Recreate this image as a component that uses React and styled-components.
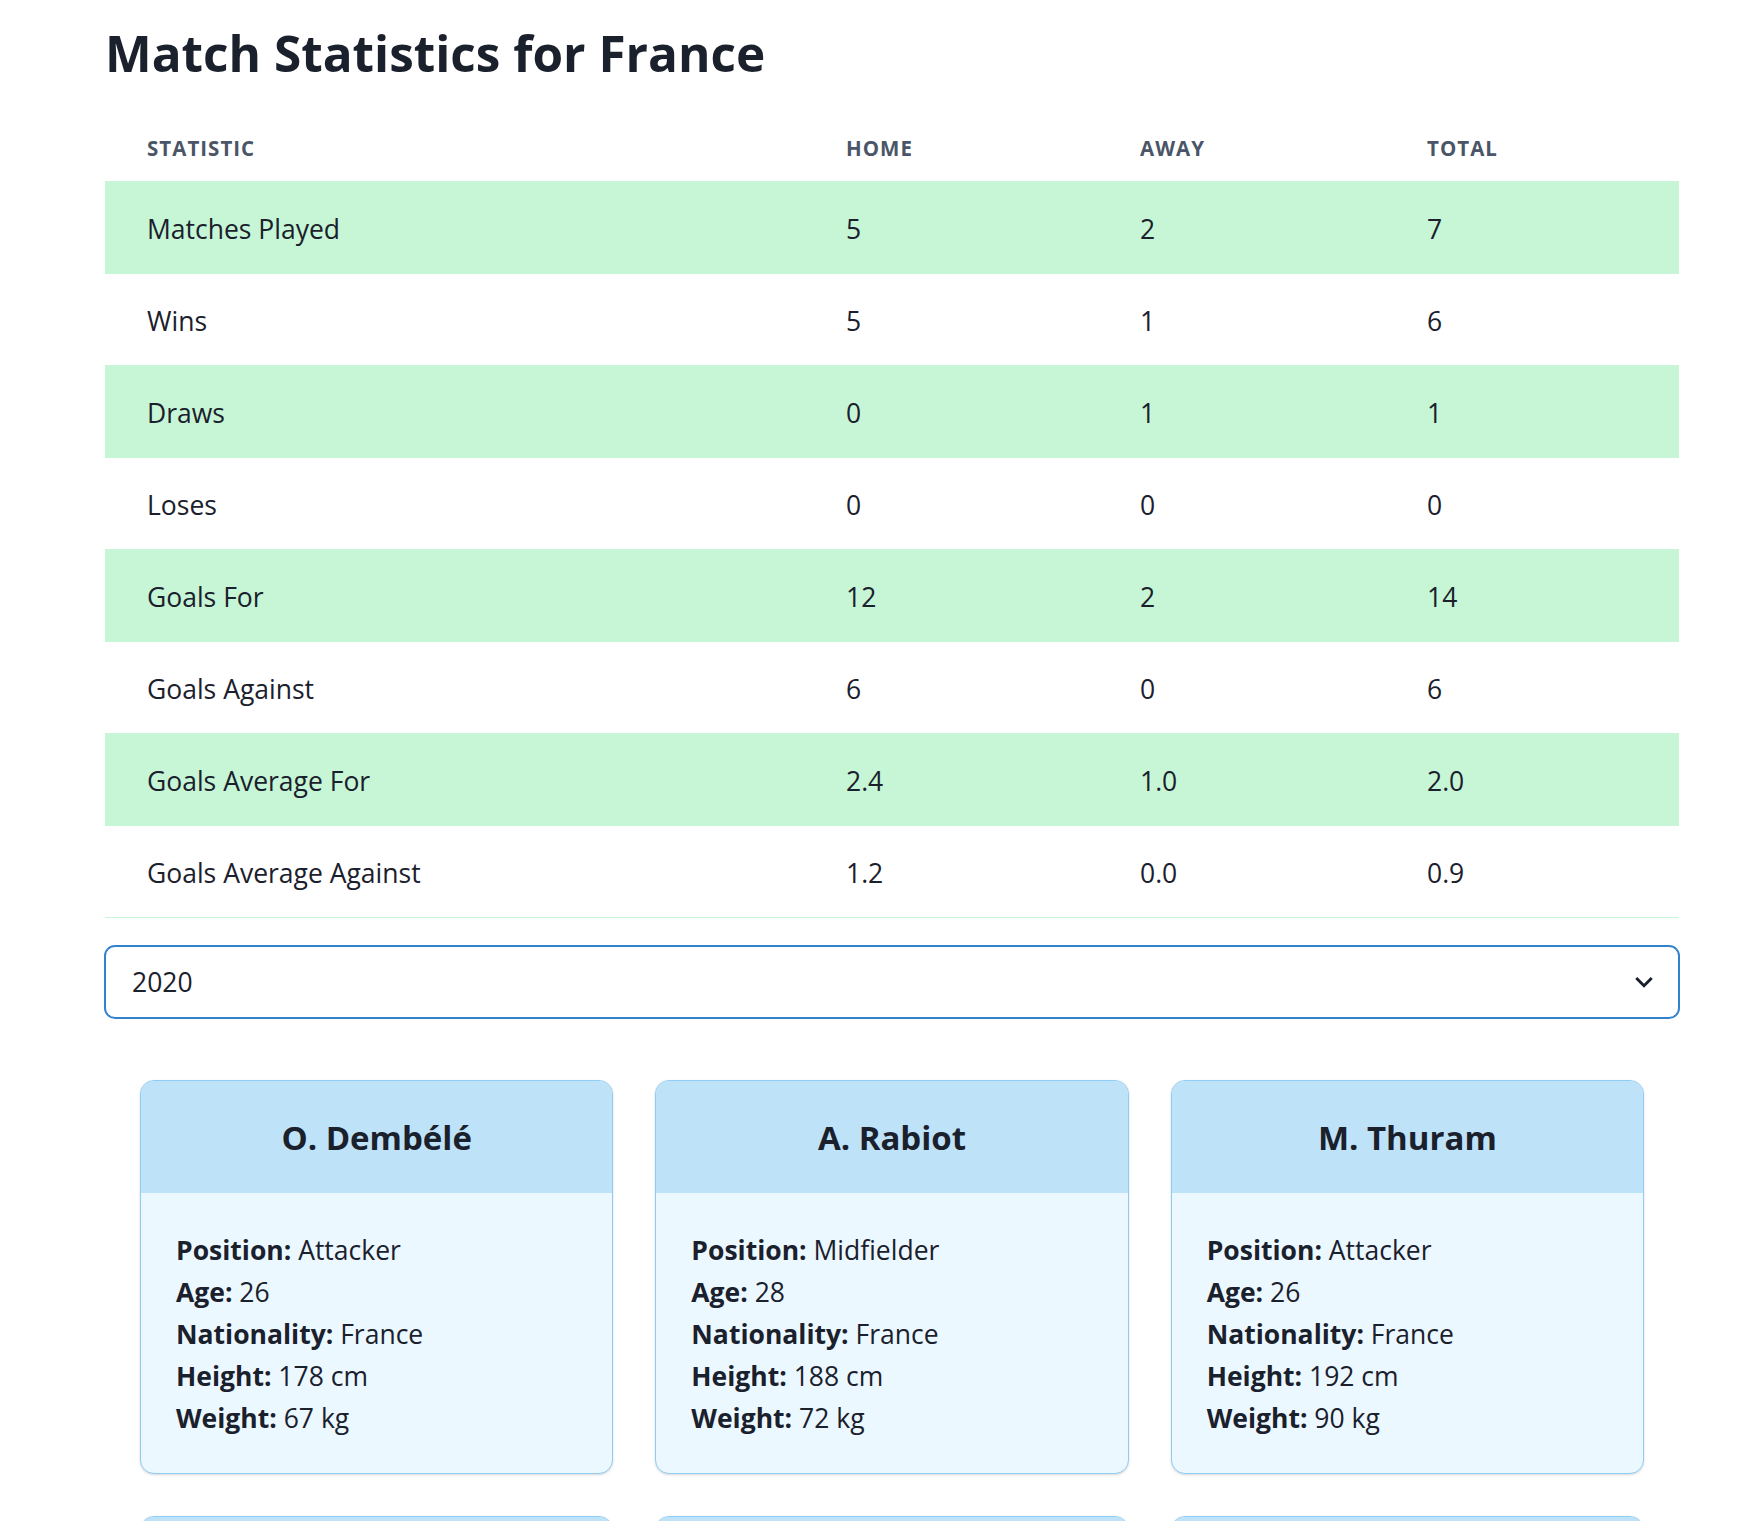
import React, { useState } from 'react';
import styled, { createGlobalStyle } from 'styled-components';

const GlobalStyle = createGlobalStyle`
  body {
    margin: 0;
    background: #ffffff;
    font-family: "Open Sans", "Noto Sans", sans-serif;
    color: #1a202c;
  }
`;

const Page = styled.main`
  padding: 23px 84px 0 105px;
`;

const Title = styled.h1`
  margin: 0 0 27px;
  font-size: 49.5px;
  line-height: 61px;
  font-weight: 700;
  color: #1a202c;
`;

const Table = styled.table`
  width: 100%;
  border-collapse: collapse;
  table-layout: fixed;
`;

const Col = styled.col`
  width: ${props => props.$w}px;
`;

const Th = styled.th`
  padding: 23px 42px 19px;
  text-align: left;
  font-size: 20.5px;
  line-height: 28px;
  font-weight: 700;
  letter-spacing: 0.05em;
  text-transform: uppercase;
  color: #4a5568;
  border-bottom: 1px solid #c6f6d5;
`;

const Row = styled.tr`
  background: ${props => (props.$striped ? '#c6f6d5' : 'transparent')};
`;

const Td = styled.td`
  padding: 30px 42px 26px;
  font-size: 26.5px;
  line-height: 35px;
  border-bottom: 1px solid #c6f6d5;
`;

const SelectWrap = styled.div`
  position: relative;
  margin-top: 28px;
`;

const Select = styled.select`
  width: 100%;
  height: 72px;
  appearance: none;
  -webkit-appearance: none;
  border: 1px solid #3182ce;
  box-shadow: 0 0 0 1px #3182ce;
  border-radius: 10px;
  background: #fff;
  padding: 0 70px 0 26px;
  font-family: inherit;
  font-size: 26.5px;
  color: #1a202c;
  outline: none;
`;

const Chevron = styled.svg`
  position: absolute;
  right: 14px;
  top: 50%;
  width: 42px;
  height: 35px;
  transform: translateY(-50%);
  pointer-events: none;
  color: #1a202c;
`;

const CardGrid = styled.section`
  margin-top: 27px;
  padding: 35px;
  display: grid;
  grid-template-columns: repeat(3, 1fr);
  gap: 42px;
`;

const Card = styled.article`
  border: 1px solid #90cdf4;
  border-radius: 14px;
  overflow: hidden;
  background: #ebf8ff;
  box-shadow: 0 1px 3px rgba(0, 0, 0, 0.1), 0 1px 2px rgba(0, 0, 0, 0.06);
`;

const CardHead = styled.header`
  background: #bee3f8;
  padding: 36px 35px 34px;
  text-align: center;

  h2 {
    margin: 0;
    font-size: 33px;
    line-height: 42px;
    font-weight: 700;
  }
`;

const CardBody = styled.div`
  padding: 36px 35px 34px;
  font-size: 26.5px;
  line-height: 42px;

  p {
    margin: 0;
  }
  b {
    font-weight: 700;
  }
`;

const stats = [
  ['Matches Played', '5', '2', '7'],
  ['Wins', '5', '1', '6'],
  ['Draws', '0', '1', '1'],
  ['Loses', '0', '0', '0'],
  ['Goals For', '12', '2', '14'],
  ['Goals Against', '6', '0', '6'],
  ['Goals Average For', '2.4', '1.0', '2.0'],
  ['Goals Average Against', '1.2', '0.0', '0.9'],
];

const players = [
  { name: 'O. Dembélé', position: 'Attacker', age: 26, nationality: 'France', height: '178 cm', weight: '67 kg' },
  { name: 'A. Rabiot', position: 'Midfielder', age: 28, nationality: 'France', height: '188 cm', weight: '72 kg' },
  { name: 'M. Thuram', position: 'Attacker', age: 26, nationality: 'France', height: '192 cm', weight: '90 kg' },
  { name: 'K. Mbappé', position: 'Attacker', age: 25, nationality: 'France', height: '178 cm', weight: '73 kg' },
  { name: 'A. Griezmann', position: 'Attacker', age: 33, nationality: 'France', height: '176 cm', weight: '73 kg' },
  { name: 'N. Kanté', position: 'Midfielder', age: 33, nationality: 'France', height: '168 cm', weight: '70 kg' },
];

function App() {
  const [season, setSeason] = useState('2020');

  return (
    <Page>
      <GlobalStyle />
      <Title>Match Statistics for France</Title>
      <Table>
        <colgroup>
          <Col $w={699} />
          <Col $w={294} />
          <Col $w={287} />
          <Col $w={294} />
        </colgroup>
        <thead>
          <tr>
            <Th>Statistic</Th>
            <Th>Home</Th>
            <Th>Away</Th>
            <Th>Total</Th>
          </tr>
        </thead>
        <tbody>
          {stats.map((row, i) => (
            <Row key={row[0]} $striped={i % 2 === 0}>
              {row.map((cell, j) => <Td key={j}>{cell}</Td>)}
            </Row>
          ))}
        </tbody>
      </Table>

      <SelectWrap>
        <Select value={season} onChange={e => setSeason(e.target.value)}>
          <option value="2020">2020</option>
          <option value="2021">2021</option>
          <option value="2022">2022</option>
          <option value="2023">2023</option>
        </Select>
        <Chevron viewBox="0 0 24 24">
          <path fill="currentColor" d="M16.59 8.59L12 13.17 7.41 8.59 6 10l6 6 6-6z" />
        </Chevron>
      </SelectWrap>

      <CardGrid>
        {players.map(p => (
          <Card key={p.name}>
            <CardHead><h2>{p.name}</h2></CardHead>
            <CardBody>
              <p><b>Position:</b> {p.position}</p>
              <p><b>Age:</b> {p.age}</p>
              <p><b>Nationality:</b> {p.nationality}</p>
              <p><b>Height:</b> {p.height}</p>
              <p><b>Weight:</b> {p.weight}</p>
            </CardBody>
          </Card>
        ))}
      </CardGrid>
    </Page>
  );
}

export default App;
